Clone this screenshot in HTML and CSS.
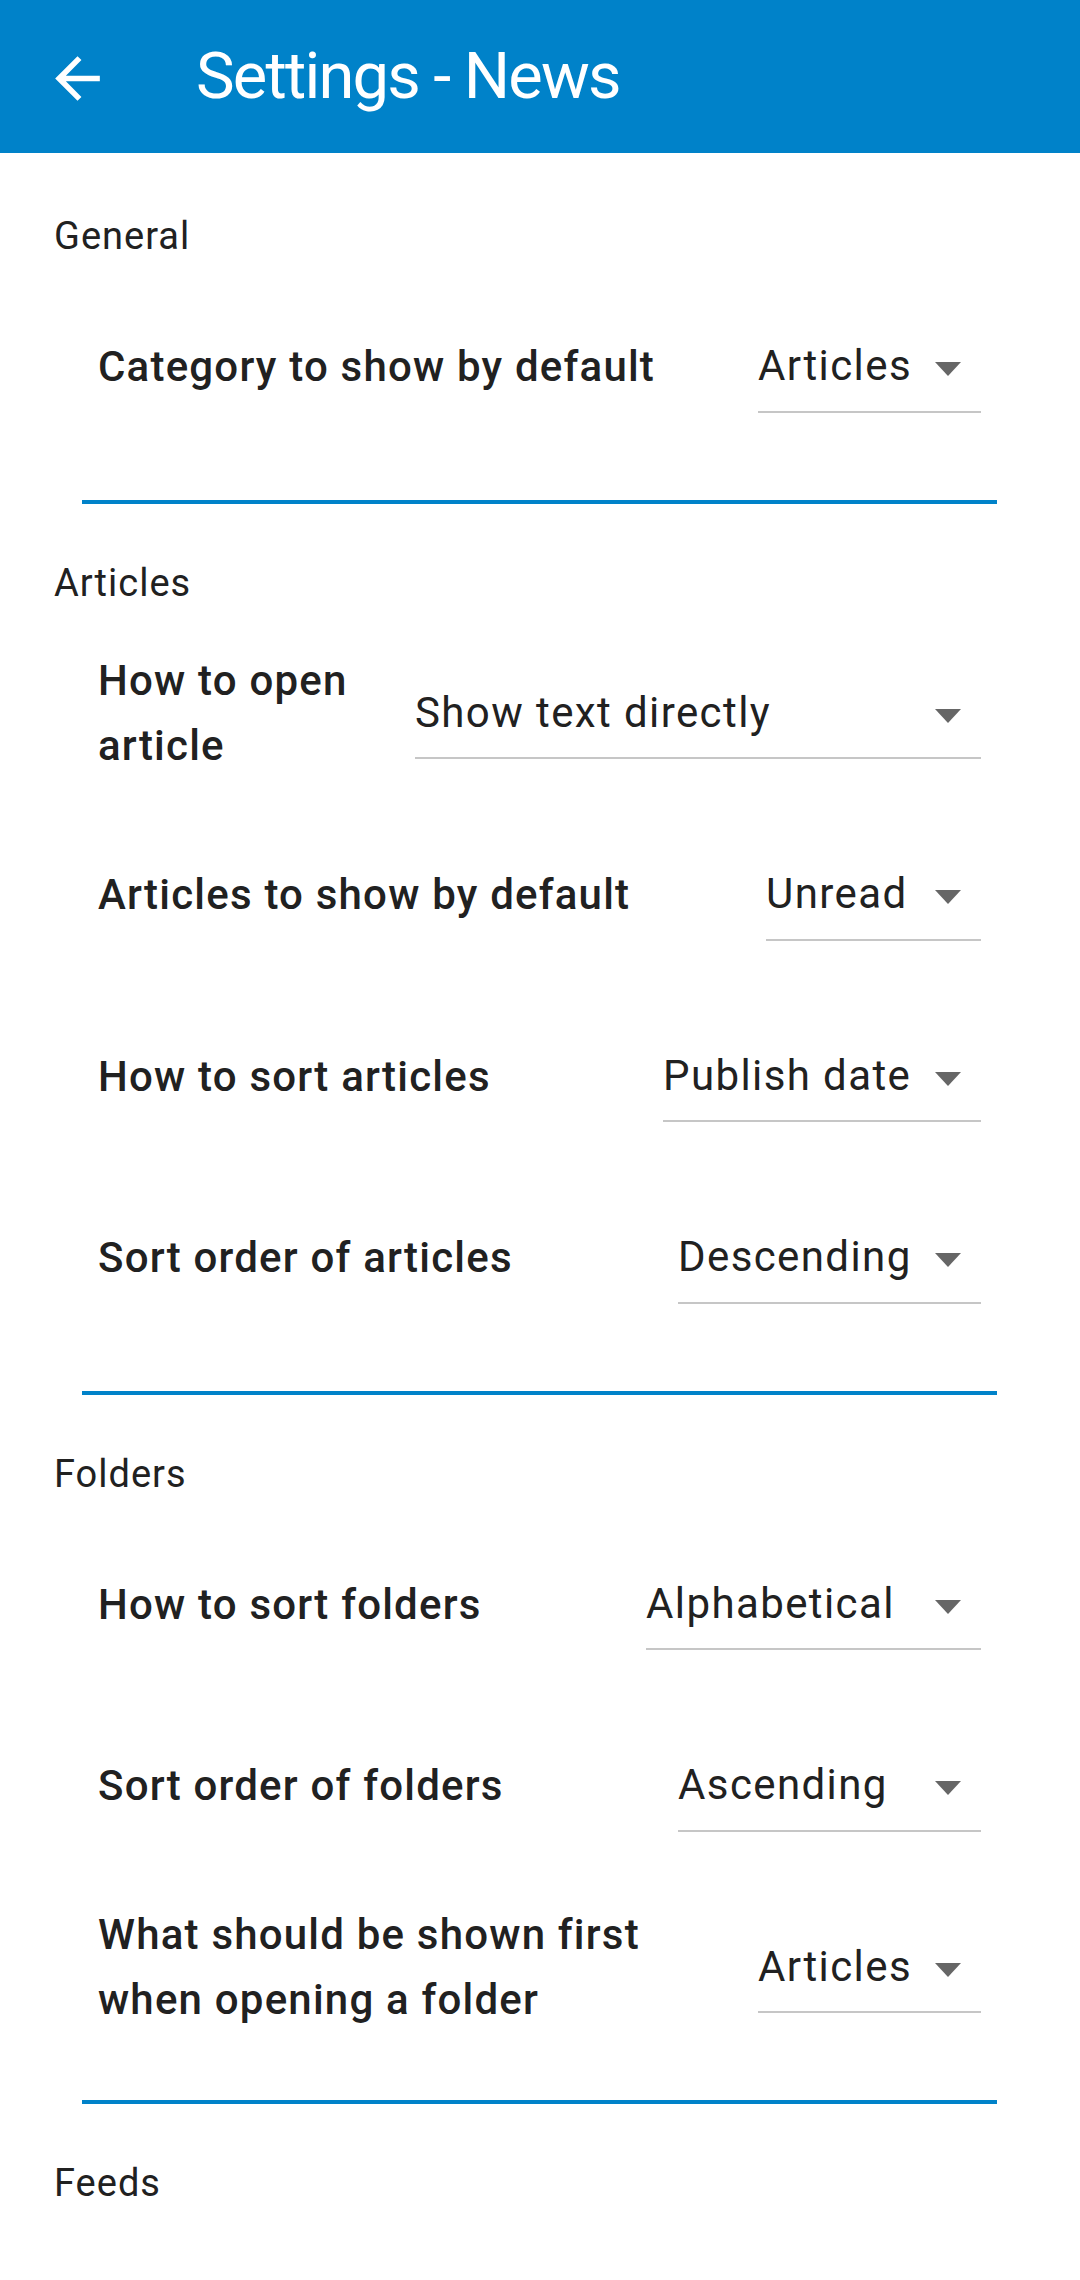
FILE: index.html
```html
<!DOCTYPE html>
<html lang="en">
<head>
<meta charset="utf-8">
<title>Settings - News</title>
<link rel="stylesheet" href="styles.css">
</head>
<body>
<header class="appbar">
  <button class="back" aria-label="Back">
    <svg viewBox="0 0 24 24" width="67" height="67"><path fill="#ffffff" d="M20 11H7.83l5.59-5.59L12 4l-8 8 8 8 1.41-1.41L7.83 13H20v-2z"/></svg>
  </button>
  <h1 class="title">Settings - News</h1>
</header>
<main class="settings">
  <section class="group">
    <h2 class="group-title">General</h2>
    <div class="row">
      <span class="row-label">Category to show by default</span>
      <div class="select w-articles"><span class="select-value">Articles</span><span class="caret"></span></div>
    </div>
  </section>
  <hr class="divider">
  <section class="group">
    <h2 class="group-title">Articles</h2>
    <div class="row">
      <span class="row-label">How to open article</span>
      <div class="select w-showtext"><span class="select-value">Show text directly</span><span class="caret"></span></div>
    </div>
    <div class="row">
      <span class="row-label">Articles to show by default</span>
      <div class="select w-unread"><span class="select-value">Unread</span><span class="caret"></span></div>
    </div>
    <div class="row">
      <span class="row-label">How to sort articles</span>
      <div class="select w-publish"><span class="select-value">Publish date</span><span class="caret"></span></div>
    </div>
    <div class="row">
      <span class="row-label">Sort order of articles</span>
      <div class="select w-order"><span class="select-value">Descending</span><span class="caret"></span></div>
    </div>
  </section>
  <hr class="divider">
  <section class="group">
    <h2 class="group-title">Folders</h2>
    <div class="row">
      <span class="row-label">How to sort folders</span>
      <div class="select w-alpha"><span class="select-value">Alphabetical</span><span class="caret"></span></div>
    </div>
    <div class="row">
      <span class="row-label">Sort order of folders</span>
      <div class="select w-order"><span class="select-value">Ascending</span><span class="caret"></span></div>
    </div>
    <div class="row">
      <span class="row-label">What should be shown first when opening a folder</span>
      <div class="select w-articles"><span class="select-value">Articles</span><span class="caret"></span></div>
    </div>
  </section>
  <hr class="divider">
  <section class="group">
    <h2 class="group-title">Feeds</h2>
  </section>
</main>
</body>
</html>
```
FILE: styles.css
```css
* {
  box-sizing: border-box;
}

html, body {
  margin: 0;
  padding: 0;
  background: #ffffff;
}

body {
  font-family: Roboto, "Noto Sans", "Liberation Sans", sans-serif;
  color: #212121;
  width: 1080px;
  min-height: 2280px;
  overflow: hidden;
}

.appbar {
  height: 153px;
  background: #0082c9;
  display: flex;
  align-items: center;
  padding-left: 44px;
}

.back {
  width: 67px;
  height: 67px;
  padding: 0;
  margin: 4px 0 0 0;
  border: 0;
  background: transparent;
  display: flex;
}

.back svg {
  display: block;
}

.title {
  margin: 0 0 0 85px;
  font-size: 65px;
  font-weight: 400;
  letter-spacing: -1.8px;
  color: #ffffff;
  line-height: 1;
}

.settings {
  padding-top: 4px;
}

.group {
  padding-top: 51px;
}

.group-title {
  margin: 0 0 11px 0;
  padding-left: 54px;
  font-size: 38px;
  line-height: 57px;
  font-weight: 400;
  letter-spacing: 1px;
  color: #212121;
}

.row {
  height: 181.5px;
  display: flex;
  align-items: center;
  gap: 40px;
  padding: 0 99px 0 98px;
}

.row-label {
  flex: 1;
  min-width: 0;
  font-size: 42px;
  line-height: 65px;
  font-weight: 500;
  letter-spacing: 1.2px;
  color: #212121;
}

.select {
  flex: none;
  height: 92px;
  display: flex;
  align-items: center;
  padding-right: 20px;
  border-bottom: 2px solid #c6c6c6;
}

.select-value {
  font-size: 42px;
  font-weight: 400;
  letter-spacing: 1.4px;
  color: #212121;
  white-space: nowrap;
}

.caret {
  margin-left: auto;
  margin-top: 7px;
  width: 0;
  height: 0;
  border-left: 13px solid transparent;
  border-right: 13px solid transparent;
  border-top: 14px solid #666666;
}

.w-articles { width: 223px; }
.w-showtext { width: 566px; }
.w-unread { width: 215px; }
.w-publish { width: 318px; }
.w-order { width: 303px; }
.w-alpha { width: 335px; }

.divider {
  margin: 42px 83px 0 82px;
  height: 4px;
  border: 0;
  background: #0082c9;
}
```
